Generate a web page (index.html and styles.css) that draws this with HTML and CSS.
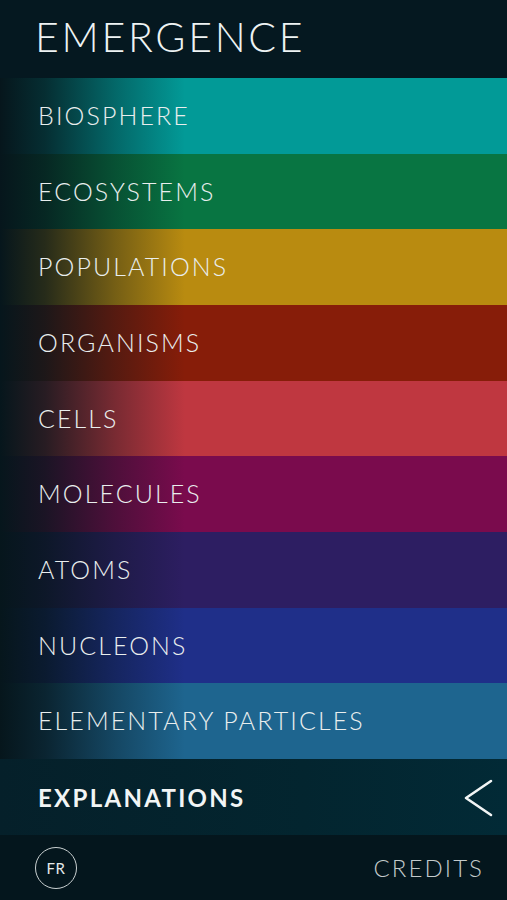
FILE: index.html
```html
<!DOCTYPE html>
<html>
<head>
<meta charset="utf-8">
<link rel="stylesheet" href="styles.css">
</head>
<body>
<div class="app">
  <header class="header"><h1 class="title">EMERGENCE</h1></header>
  <ul class="levels">
    <li class="level biosphere">BIOSPHERE</li>
    <li class="level ecosystems">ECOSYSTEMS</li>
    <li class="level populations">POPULATIONS</li>
    <li class="level organisms">ORGANISMS</li>
    <li class="level cells">CELLS</li>
    <li class="level molecules">MOLECULES</li>
    <li class="level atoms">ATOMS</li>
    <li class="level nucleons">NUCLEONS</li>
    <li class="level particles">ELEMENTARY PARTICLES</li>
  </ul>
  <div class="explanations">
    <span class="exp-label">EXPLANATIONS</span>
    <svg class="chevron" width="34" height="40" viewBox="0 0 34 40"><polyline points="30,3 5,20 30,37" fill="none" stroke="#f2f5f5" stroke-width="2.6" stroke-linecap="round" stroke-linejoin="round"/></svg>
  </div>
  <footer class="footer">
    <span class="lang">FR</span>
    <span class="credits">CREDITS</span>
  </footer>
</div>
</body>
</html>
```
FILE: styles.css
```css
* { box-sizing: border-box; }
html, body { margin: 0; padding: 0; }
body { background: #04161d; font-family: "Lato", "Open Sans", sans-serif; }
.app { width: 507px; height: 900px; display: flex; flex-direction: column; }
.header { height: 78px; background: #051820; display: flex; align-items: center; padding-left: 35px; }
.title { margin: 0; font-weight: 300; font-size: 41px; letter-spacing: 2.7px; color: #eef3f3; line-height: 1; padding-bottom: 6px; }
.levels { list-style: none; margin: 0; padding: 0; display: flex; flex-direction: column; height: 681px; }
.level { flex: 1; display: flex; align-items: center; padding-left: 38px; font-size: 25px; font-weight: 300; letter-spacing: 2.1px; color: #e9eeee; position: relative; isolation: isolate; padding-bottom: 2px; }
.level::before { content: ""; position: absolute; inset: 0; z-index: -1; background: linear-gradient(to right, rgba(6,22,28,1) 0, rgba(6,22,28,0.82) 45px, rgba(6,22,28,0.38) 115px, rgba(6,22,28,0) 185px); }
.biosphere { background: #029a97; }
.ecosystems { background: #087542; }
.populations { background: #b98b10; }
.organisms { background: #871d09; }
.cells { background: #bf3740; }
.molecules { background: #7a0b4d; }
.atoms { background: #2d1e62; }
.nucleons { background: #1f2f89; }
.particles { background: #1e658f; }
.explanations { height: 76px; display: flex; align-items: center; justify-content: space-between; padding: 0 12px 0 38px; background: linear-gradient(to right, #05202a 0, #03252f 60%, #022a36 100%); }
.exp-label { font-size: 24px; font-weight: 700; letter-spacing: 2.3px; color: #f2f5f5; }
.chevron { display: block; margin-top: 2px; }
.footer { flex: 1; background: #04161d; display: flex; align-items: center; justify-content: space-between; padding: 0 23px 0 35px; }
.lang { width: 42px; height: 42px; border: 1.5px solid #c9d0d1; border-radius: 50%; display: flex; align-items: center; justify-content: center; font-size: 15px; color: #e5eaea; font-weight: 400; letter-spacing: 0.5px; }
.credits { font-size: 24px; font-weight: 300; letter-spacing: 2.1px; color: #c3cacb; }
```
